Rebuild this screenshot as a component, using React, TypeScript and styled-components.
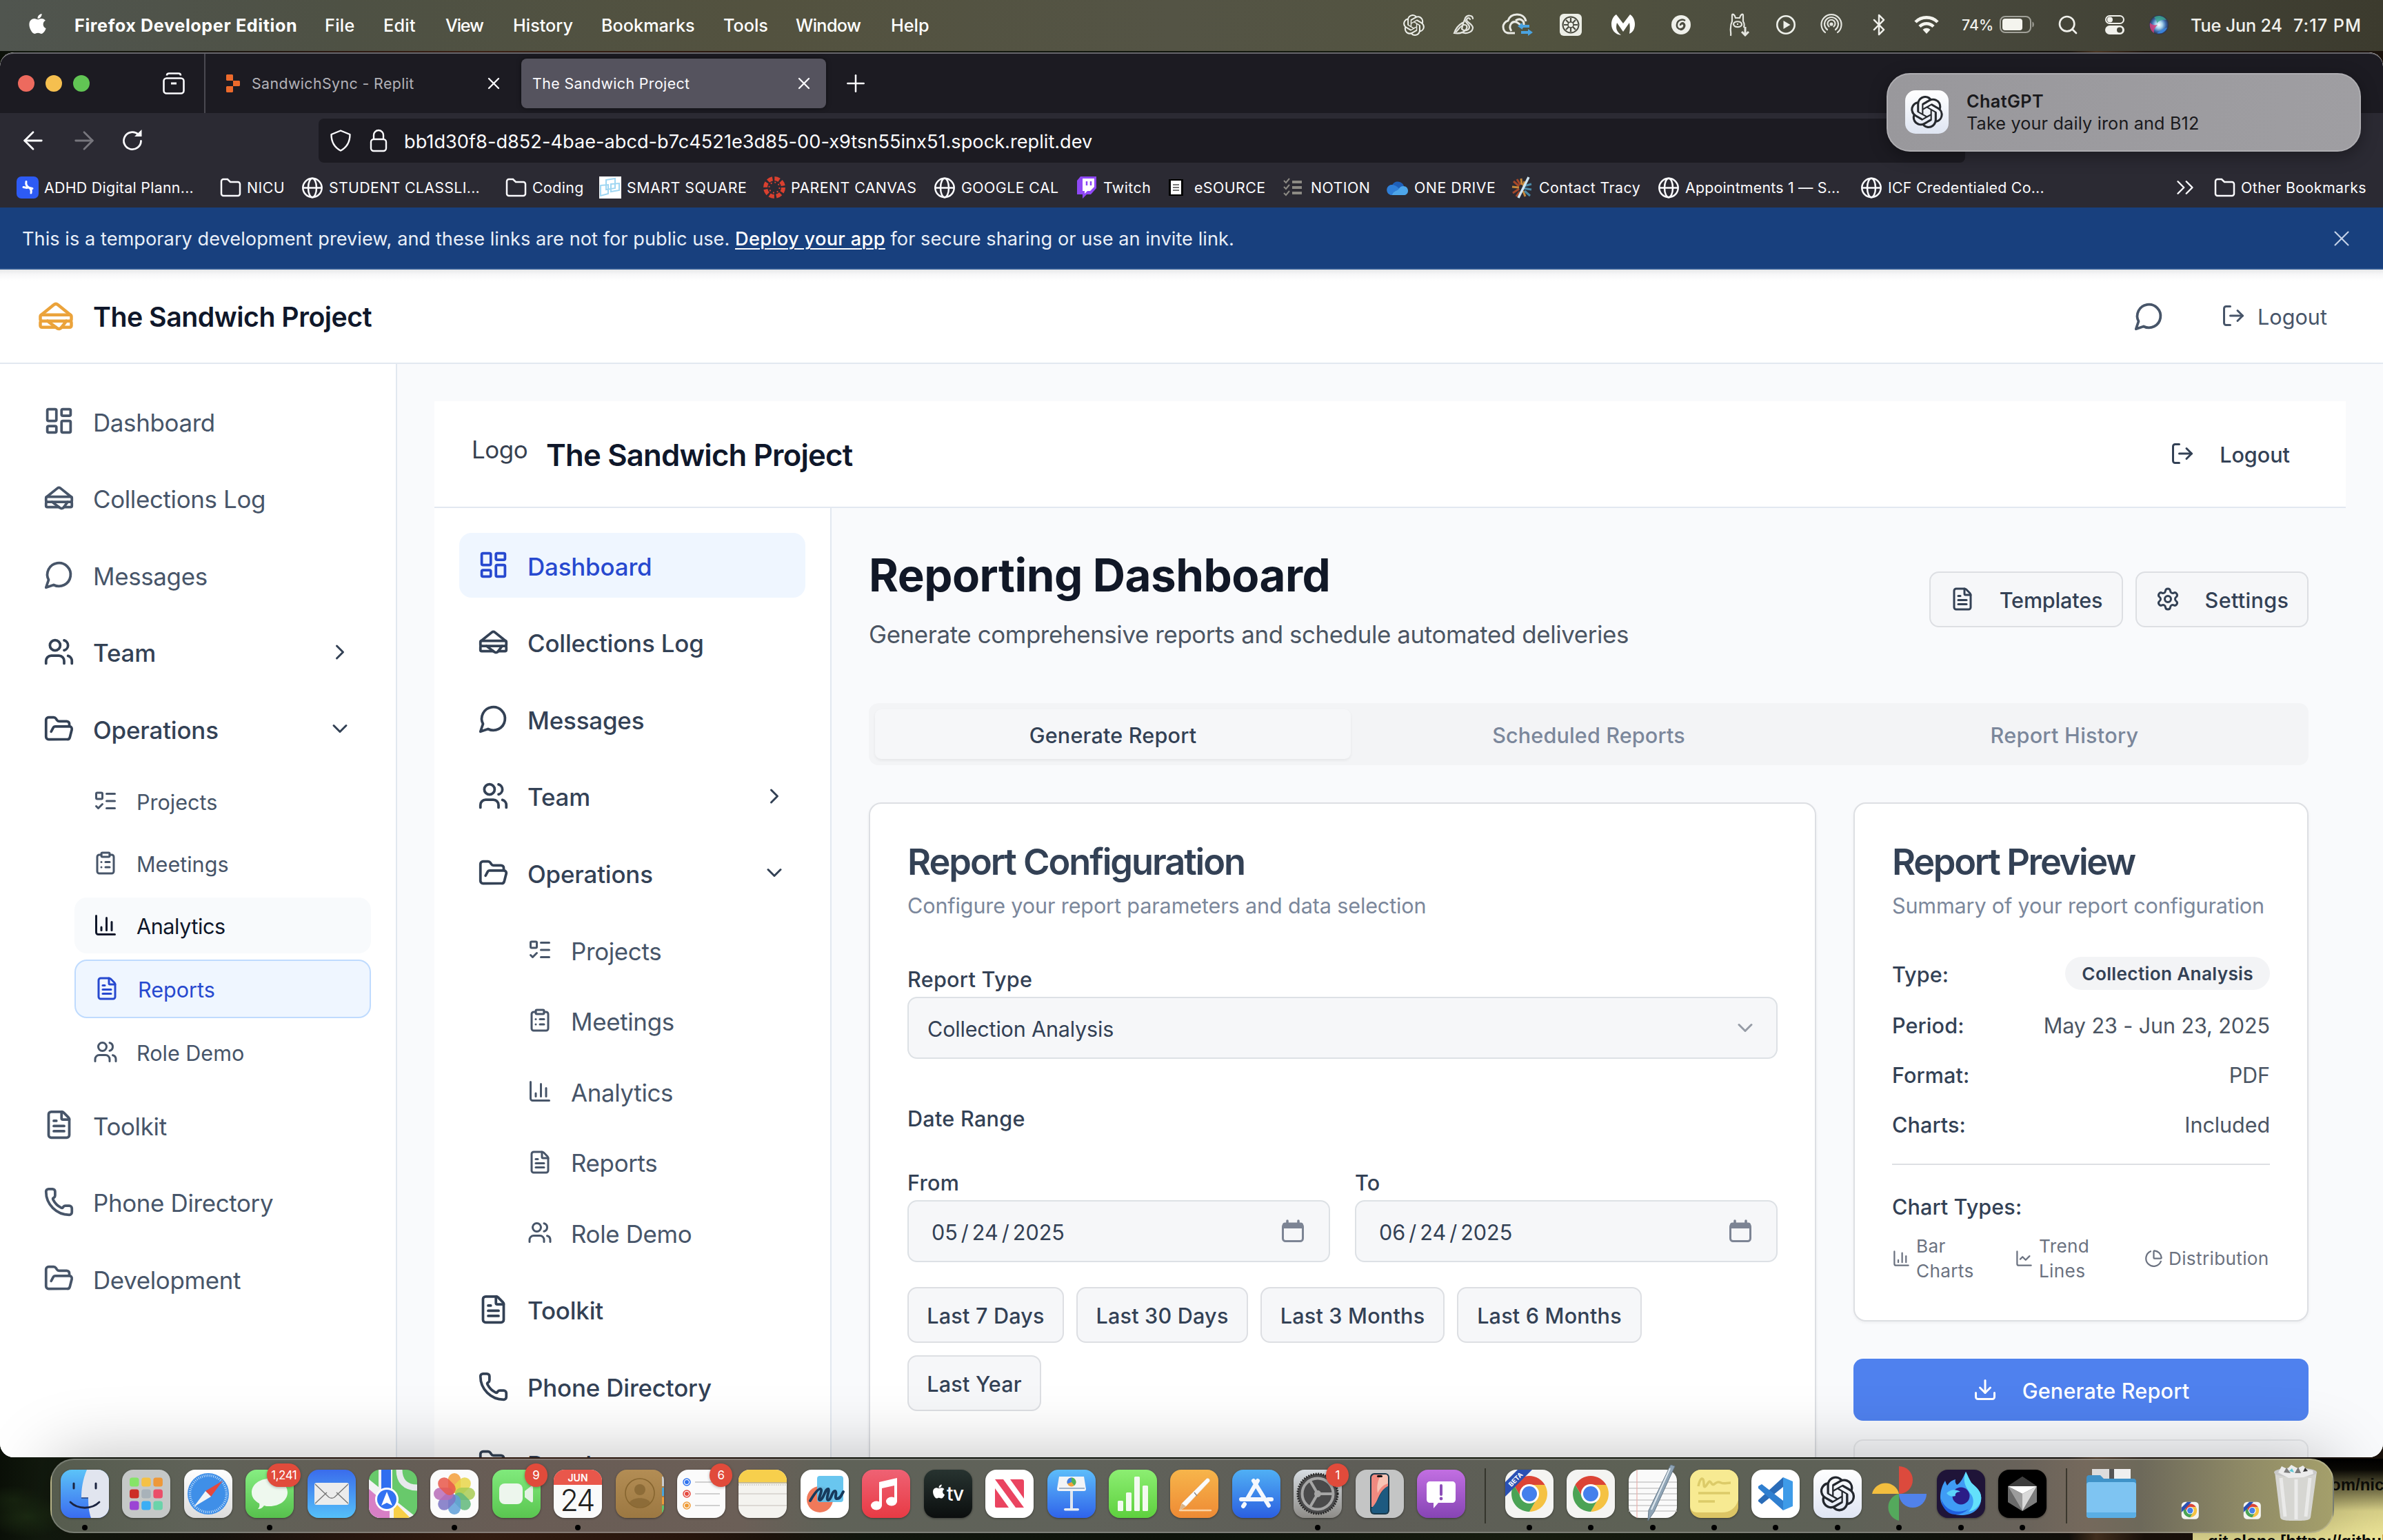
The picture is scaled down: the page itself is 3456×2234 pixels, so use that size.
import React from 'react';
import styled, { createGlobalStyle, css } from 'styled-components';
import {
  ArrowLeft,
  ArrowRight,
  Bluetooth,
  ChartColumn,
  ChartLine,
  ChartPie,
  ChevronDown,
  ChevronRight,
  ChevronsRight,
  ClipboardList,
  Download,
  FileText,
  FolderOpen,
  LayoutDashboard,
  ListTodo,
  LogOut,
  Phone,
  Plus,
  Sandwich,
  Search,
  Settings,
  Users,
  X,
} from 'lucide-react';
import { FaApple } from 'react-icons/fa';

const Global = createGlobalStyle`
  * { box-sizing: border-box; }
  body {
    margin: 0;
    font-family: Inter, "Noto Sans", sans-serif;
    -webkit-font-smoothing: antialiased;
  }
  svg { display: block; flex: none; }
`;

const type = (size: number, weight: number, spacing = 0, line = 1.43) => css`
  display: block;
  font-size: ${size * 0.97}px;
  font-weight: ${weight};
  letter-spacing: ${spacing}em;
  line-height: ${size * line}px;
  margin-top: 0.05em;
  margin-bottom: -0.05em;
  white-space: nowrap;
`;

/* ---------- shared glyphs ---------- */

const OPENAI =
  'M22.2819 9.8211a5.9847 5.9847 0 0 0-.5157-4.9108 6.0462 6.0462 0 0 0-6.5098-2.9A6.0651 6.0651 0 0 0 4.9807 4.1818a5.9847 5.9847 0 0 0-3.9977 2.9 6.0462 6.0462 0 0 0 .7427 7.0966 5.98 5.98 0 0 0 .511 4.9107 6.051 6.051 0 0 0 6.5146 2.9001A5.9847 5.9847 0 0 0 13.2599 24a6.0557 6.0557 0 0 0 5.7718-4.2058 5.9894 5.9894 0 0 0 3.9977-2.9001 6.0557 6.0557 0 0 0-.7475-7.0729zm-9.022 12.6081a4.4755 4.4755 0 0 1-2.8764-1.0408l.1419-.0804 4.7783-2.7582a.7948.7948 0 0 0 .3927-.6813v-6.7369l2.02 1.1686a.071.071 0 0 1 .038.052v5.5826a4.504 4.504 0 0 1-4.4945 4.4944zm-9.6607-4.1254a4.4708 4.4708 0 0 1-.5346-3.0137l.142.0852 4.783 2.7582a.7712.7712 0 0 0 .7806 0l5.8428-3.3685v2.3324a.0804.0804 0 0 1-.0332.0615L9.74 19.9502a4.4992 4.4992 0 0 1-6.1408-1.6464zM2.3408 7.8956a4.485 4.485 0 0 1 2.3655-1.9728V11.6a.7664.7664 0 0 0 .3879.6765l5.8144 3.3543-2.0201 1.1685a.0757.0757 0 0 1-.071 0l-4.8303-2.7865A4.504 4.504 0 0 1 2.3408 7.872zm16.5963 3.8558L13.1038 8.364 15.1192 7.2a.0757.0757 0 0 1 .071 0l4.8303 2.7913a4.4944 4.4944 0 0 1-.6765 8.1042v-5.6772a.79.79 0 0 0-.407-.667zm2.0107-3.0231l-.142-.0852-4.7735-2.7818a.7759.7759 0 0 0-.7854 0L9.409 9.2297V6.8974a.0662.0662 0 0 1 .0284-.0615l4.8303-2.7866a4.4992 4.4992 0 0 1 6.6802 4.66zM8.3065 12.863l-2.02-1.1638a.0804.0804 0 0 1-.038-.0567V6.0742a4.4992 4.4992 0 0 1 7.3757-3.4537l-.142.0805L8.704 5.459a.7948.7948 0 0 0-.3927.6813zm1.0976-2.3654l2.602-1.4998 2.6069 1.4998v2.9994l-2.5974 1.4997-2.6067-1.4997Z';

const OpenAiMark = ({ size, color }: { size: number; color: string }) => (
  <svg width={size} height={size} viewBox="0 0 24 24" fill={color}>
    <path d={OPENAI} />
  </svg>
);

const MessageBubble = ({ size = 45 }: { size?: number }) => (
  <svg width={size} height={size} viewBox="0 0 24 24" fill="none" stroke="currentColor" strokeWidth="2" strokeLinecap="round" strokeLinejoin="round">
    <path d="M7.9 20A9 9 0 1 0 4 16.1L2 22Z" />
  </svg>
);

/* ---------- desktop ---------- */

const Screen = styled.div`
  position: relative;
  display: flex;
  flex-direction: column;
  width: 3456px;
  height: 2234px;
  overflow: hidden;
  background:
    radial-gradient(60px 30px at 40px 2200px, #1b2a12, transparent),
    radial-gradient(50px 20px at 20px 2175px, #16220f, transparent),
    linear-gradient(90deg, #0b1008 0, #121a0e 60px, #17140e 300px, #2a1810 480px, #3a2014 700px, #2d190f 1000px, #20160e 1120px, #141a10 1250px, #10160d 1700px, #1a2012 2200px, #12170f 2700px, #14110c 3000px, #4a3421 3040px, #1c130c 3110px, #1a120c 100%);
`;

const StickyNote = styled.div`
  position: absolute;
  left: 3180px;
  top: 2116px;
  width: 300px;
  height: 130px;
  padding: 19px 0 0 22px;
  color: #0c0c08;
  background: linear-gradient(180deg, #000 0, #0a0905 16px, #6f6a44 44px, #d8d088 76px, #f6ee9f 100%);
`;

const NoteLine = styled.div<{ $indent?: number }>`
  font-family: "Liberation Sans", Arial, sans-serif;
  font-size: 24px;
  font-weight: 700;
  line-height: 38px;
  height: 82px;
  white-space: nowrap;
  padding-left: ${(p) => p.$indent ?? 0}px;
`;

/* ---------- menu bar ---------- */

const MenuBar = styled.div`
  display: flex;
  align-items: center;
  flex: none;
  height: 74px;
  padding: 0 0 2px 38px;
  color: #fff;
  background: linear-gradient(90deg, #50554f 0, #4e5144 500px, #53523f 1100px, #545445 1700px, #52533f 2200px, #4a4b3f 2700px, #3c3b2e 3456px);
`;

const AppleSlot = styled.div`
  width: 70px;
  padding-bottom: 4px;
`;

const MenuItem = styled.span<{ $w: number; $bold?: boolean; $ls?: number }>`
  ${(p) => type(26, p.$bold ? 700 : 500, p.$ls ?? (p.$bold ? 0.0233 : 0))}
  width: ${(p) => p.$w}px;
`;

const StatusArea = styled.div`
  display: flex;
  align-items: center;
  width: 1441px;
  margin-left: auto;
  color: #f1f1ec;
`;

const StatusSlot = styled.div<{ $w: number }>`
  display: flex;
  align-items: center;
  justify-content: center;
  width: ${(p) => p.$w}px;
`;

const BatterySlot = styled.div`
  display: flex;
  align-items: center;
  gap: 9px;
  width: 134px;
  padding-left: 16px;
`;

const BatteryText = styled.span`
  ${type(22, 500)}
`;

const Clock = styled.div`
  display: flex;
  gap: 16px;
  padding-left: 14px;
`;

const ClockText = styled.span<{ $ls: number }>`
  ${(p) => type(26, 500, p.$ls)}
`;

const StatusIcons = () => (
  <StatusArea>
    <StatusSlot $w={71}>
      <OpenAiMark size={31} color="#eceee8" />
    </StatusSlot>
    <StatusSlot $w={75}>
      <svg width="34" height="32" viewBox="0 0 34 32" fill="none" stroke="#e4e5df" strokeWidth="2.2" strokeLinecap="round">
        <path d="M29 7c0-5-8-6-11-1-3 6 6 8 6 13s-7 7-11 3" />
        <path d="M25 8c-1-3-4-2-5 0-1 4 8 6 9 12 0 6-8 10-16 7" />
        <path d="M14 13C9 16 4 22 2 28c7 1 13 0 17-5 3-4 1-7-2-7-5 0-8 6-12 10M17 9c-2 4-3 9-4 13" />
      </svg>
    </StatusSlot>
    <StatusSlot $w={78}>
      <svg width="46" height="34" viewBox="0 0 46 34" fill="none" stroke="#e9eae4" strokeWidth="3">
        <path d="M20 29H12C6 29 3 25 3 20c0-4 3-8 7-9C12 5 17 2 23 2c7 0 12 4 13 10" />
        <path d="M15 26c-5-7 0-15 7-13 3 1 8 6 10 8" />
        <path d="M21 11c6-5 13 0 12 6" />
        <path d="M24 19l7-5v3h10v4H31v3z M46 28l-7-5v3H29v4h10v3z" fill="#4aa3e0" stroke="none" />
      </svg>
    </StatusSlot>
    <StatusSlot $w={78}>
      <svg width="32" height="32" viewBox="0 0 32 32">
        <rect width="32" height="32" rx="6" fill="#eceee6" />
        <circle cx="16" cy="16" r="11.5" fill="none" stroke="#4a4b40" strokeWidth="2" />
        <g stroke="#4a4b40" strokeWidth="2.2">
          <path d="M16 6v20M6 16h20M9 9l14 14M23 9L9 23" />
        </g>
        <circle cx="16" cy="16" r="4" fill="#eceee6" stroke="#4a4b40" strokeWidth="1.6" />
      </svg>
    </StatusSlot>
    <StatusSlot $w={74}>
      <svg width="34" height="30" viewBox="0 0 34 30" fill="#fff">
        <path d="M7 0l10 13L27 0c5 3 7 9 7 14 0 7-3 12-8 14 1-6 1-12 0-16l-9 13-9-13c-2 8-1 12 6 18C5 29 0 22 0 14 0 9 2 3 7 0z" />
      </svg>
    </StatusSlot>
    <StatusSlot $w={94}>
      <svg width="30" height="30" viewBox="0 0 30 30">
        <circle cx="15" cy="15" r="14" fill="#eff0ea" />
        <path d="M21 9c-4-3-11-1-12 5-1 5 3 8 6 7 5-1 6-7 2-8-2 0-3 1-3 3 0-3 3-5 5-3 3 3 0 9-5 9" fill="none" stroke="#4a4b40" strokeWidth="2.400" />
      </svg>
    </StatusSlot>
    <StatusSlot $w={74}>
      <svg width="30" height="34" viewBox="0 0 30 34" fill="none" stroke="#e4e5df" strokeWidth="2.2">
        <path d="M3 33c1-5-1-7 0-12 0-4 1-7 2-9V3c0-3 4-1 5 4h6c1-5 5-7 5-4v9c2 3 2 6 1 9M7 16c1-5 11-5 12 0s-11 6-12 0zM12 16h2" />
        <path d="M24 20v12m-5-5l5 5 5-5" strokeWidth="3" />
      </svg>
    </StatusSlot>
    <StatusSlot $w={62}>
      <svg width="30" height="30" viewBox="0 0 30 30">
        <circle cx="15" cy="15" r="12.7" fill="none" stroke="#eef0ea" strokeWidth="2.6" />
        <path d="M11.5 9v12l10-6z" fill="#eef0ea" />
      </svg>
    </StatusSlot>
    <StatusSlot $w={70}>
      <svg width="32" height="32" viewBox="0 0 32 32" fill="none" stroke="#e4e5df" strokeWidth="2.2" strokeLinecap="round">
        <path d="M7 27a14.500 14.500 0 1 1 18 0" />
        <path d="M10 23a10 10 0 1 1 12 0" />
        <path d="M12.500 18.500a5.500 5.500 0 1 1 7 0" />
        <circle cx="16" cy="15" r="1.500" fill="#e4e5df" />
      </svg>
    </StatusSlot>
    <StatusSlot $w={67}>
      <Bluetooth size={34} strokeWidth={1.7} />
    </StatusSlot>
    <StatusSlot $w={71}>
      <svg width="36" height="26" viewBox="0 0 36 26" fill="none" stroke="#f4f4ee" strokeWidth="4.600">
        <path d="M2 9a22.600 22.600 0 0 1 32 0" />
        <path d="M8 15.500a14 14 0 0 1 20 0" />
        <path d="M18 26l-5.500-6a8 8 0 0 1 11 0z" fill="#f4f4ee" stroke="none" />
      </svg>
    </StatusSlot>
    <BatterySlot>
      <BatteryText>74%</BatteryText>
      <svg width="51" height="25" viewBox="0 0 51 25">
        <rect x="1" y="1" width="44" height="23" rx="7" fill="none" stroke="#a2a29a" strokeWidth="2" />
        <rect x="4" y="4" width="29" height="17" rx="4" fill="#f4f4ee" />
        <path d="M47.500 8.500c3 1 3 7 0 8z" fill="#a2a29a" />
      </svg>
    </BatterySlot>
    <StatusSlot $w={72}>
      <Search size={32} strokeWidth={2} />
    </StatusSlot>
    <StatusSlot $w={64}>
      <svg width="28" height="28" viewBox="0 0 28 28">
        <rect x="1" y="1" width="26" height="11" rx="5.500" fill="none" stroke="#f1f1ec" strokeWidth="2" />
        <circle cx="7" cy="6.500" r="4" fill="#f1f1ec" />
        <rect y="15" width="28" height="13" rx="6.500" fill="#f1f1ec" />
        <circle cx="21" cy="21.500" r="4" fill="#45463a" />
      </svg>
    </StatusSlot>
    <StatusSlot $w={64}>
      <svg width="30" height="30" viewBox="0 0 30 30">
        <defs>
          <radialGradient id="siri" cx="50%" cy="50%" r="50%">
            <stop offset="0" stopColor="#fff" />
            <stop offset=".35" stopColor="#a9d6ee" />
            <stop offset=".7" stopColor="#3f6fb0" />
            <stop offset="1" stopColor="#2b3048" />
          </radialGradient>
        </defs>
        <circle cx="15" cy="15" r="14" fill="url(#siri)" />
        <path d="M2 12c3 3 6 4 11 3-4 4-6 8-5 12C3 24 1 18 2 12z" fill="#d2407a" opacity=".85" />
        <path d="M8 4c6-4 14-2 18 4-5-1-11 0-14 5 0-3-1-6-4-9z" fill="#3aa58b" opacity=".8" />
        <path d="M12 27c5-3 8-6 15-8-2 6-8 10-15 8z" fill="#3a86e0" opacity=".9" />
      </svg>
    </StatusSlot>
    <Clock>
      <ClockText $ls={-0.0065}>Tue Jun 24</ClockText>
      <ClockText $ls={0.04}>7:17 PM</ClockText>
    </Clock>
  </StatusArea>
);

const menus: [string, number, number][] = [
  ['File', 85, 0.012],
  ['Edit', 90, 0.011],
  ['View', 98, -0.048],
  ['History', 128, 0],
  ['Bookmarks', 177, 0],
  ['Tools', 105, 0],
  ['Window', 138, -0.0255],
  ['Help', 80, 0],
];

/* ---------- browser chrome ---------- */

const BrowserWindow = styled.div`
  display: flex;
  flex-direction: column;
  flex: none;
  height: 2038px;
  margin-top: 2px;
  overflow: hidden;
  border-radius: 20px;
  background: #fff;
`;

const TabStrip = styled.div`
  display: flex;
  align-items: center;
  flex: none;
  height: 88px;
  background: #1c1b22;
  border-top: 2px solid #66656b;
  border-radius: 20px 20px 0 0;
`;

const TrafficLights = styled.div`
  display: flex;
  gap: 16px;
  width: 236px;
  padding-left: 26px;
`;

const Light = styled.i<{ $c: string }>`
  width: 24px;
  height: 24px;
  border-radius: 50%;
  background: ${(p) => p.$c};
`;

const FirefoxViewButton = styled.div`
  display: flex;
  align-items: center;
  height: 100%;
  width: 62px;
  border-right: 2px solid #4a4951;
`;

const Tab = styled.div<{ $active?: boolean; $w: number }>`
  display: flex;
  align-items: center;
  width: ${(p) => p.$w}px;
  height: 72px;
  padding: 0 ${(p) => (p.$active ? 18 : 26)}px 0 ${(p) => (p.$active ? 16 : 24)}px;
  border-radius: 8px;
  color: ${(p) => (p.$active ? '#fbfbfe' : '#b3b2b8')};
  background: ${(p) => (p.$active ? '#55535e' : 'transparent')};
  box-shadow: ${(p) => (p.$active ? '0 0 6px rgba(0,0,0,.5)' : 'none')};
`;

const TabLabel = styled.span`
  ${type(22, 400, 0.019)}
  flex: 1;
`;

const TabFavicon = styled.div`
  width: 32px;
  margin-right: 11px;
`;

const NewTab = styled.div`
  margin-left: 23px;
  color: #fbfbfe;
`;

const NavBar = styled.div`
  display: flex;
  align-items: center;
  flex: none;
  height: 80px;
  color: #fbfbfe;
  background: #2b2a33;
`;

const NavButtons = styled.div`
  display: flex;
  align-items: center;
  width: 462px;
  padding-left: 27px;
  gap: 32px;
`;

const UrlField = styled.div`
  display: flex;
  align-items: center;
  width: 2388px;
  height: 64px;
  padding-left: 16px;
  border-radius: 8px;
  background: #1c1b22;
`;

const UrlText = styled.span`
  ${type(28, 400, 0.0005)}
  margin-left: 22px;
  padding-top: 1px;
`;

const BookmarkBar = styled.div`
  display: flex;
  align-items: center;
  flex: none;
  height: 57px;
  padding: 0 24px 1px;
  color: #fbfbfe;
  background: #2b2a33;
`;

const Bookmark = styled.div<{ $w?: number }>`
  display: flex;
  align-items: center;
  gap: 8px;
  width: ${(p) => (p.$w ? `${p.$w}px` : 'auto')};
`;

const BookmarkLabel = styled.span<{ $ls?: number }>`
  ${(p) => type(22, 400, p.$ls ?? 0.02)}
`;

const BookmarkEnd = styled.div`
  display: flex;
  align-items: center;
  gap: 20px;
  margin-left: auto;
`;

const FolderGlyph = () => (
  <svg width="32" height="32" viewBox="0 0 32 32" fill="none" stroke="#fbfbfe" strokeWidth="2.500">
    <path d="M3 25V7a3 3 0 0 1 3-3h6l4 4h11a3 3 0 0 1 3 3v14a3 3 0 0 1-3 3H6a3 3 0 0 1-3-3z" />
  </svg>
);

const GlobeGlyph = () => (
  <svg width="32" height="32" viewBox="0 0 32 32" fill="none" stroke="#fbfbfe" strokeWidth="2.500">
    <circle cx="16" cy="16.500" r="13.700" />
    <ellipse cx="16" cy="16.500" rx="6" ry="13.700" />
    <path d="M2.500 16.500h27" />
  </svg>
);

const PlannerGlyph = () => (
  <svg width="32" height="32" viewBox="0 0 32 32">
    <rect width="32" height="32" rx="7" fill="#2d5bf5" />
    <path d="M14 7.500c-1 5 1 7 4 8.500 3 2 4 4 3 8M10 15.500l5 1M17 16l6 1.500" fill="none" stroke="#fff" strokeWidth="3" strokeLinecap="round" />
  </svg>
);

const SquareGlyph = () => (
  <svg width="32" height="32" viewBox="0 0 32 32">
    <rect width="32" height="32" fill="#fff" />
    <path d="M10 5l13-2v14l-13 2zM2 13l11-1v13L2 28zM17 11l12-1v10l-12 2z" fill="none" stroke="#9fd6f2" strokeWidth="2" />
  </svg>
);

const CanvasGlyph = () => (
  <svg width="32" height="32" viewBox="0 0 32 32">
    <circle cx="16" cy="16" r="13" fill="none" stroke="#d9402f" strokeWidth="6" strokeDasharray="7.2 3" />
    <circle cx="16" cy="16" r="7.500" fill="none" stroke="#d9402f" strokeWidth="2" strokeDasharray="2 3.900" />
  </svg>
);

const TwitchGlyph = () => (
  <svg width="32" height="32" viewBox="0 0 32 32">
    <path d="M7 0h23v17l-8 9h-6l-6 6v-6H2V6z" fill="#8f48f5" />
    <path d="M10 3h17v12l-6 6h-4l-4 4v-4h-3z" fill="#fff" />
    <path d="M16 7v6M22 7v6" stroke="#8f48f5" strokeWidth="2.500" />
  </svg>
);

const SourceGlyph = () => (
  <svg width="32" height="32" viewBox="0 0 32 32">
    <rect x="3" y="4" width="21" height="24" fill="#000" />
    <rect x="6" y="6" width="15" height="20" fill="#fff" />
    <path d="M9 12h9M9 16h9M9 20h9" stroke="#777" strokeWidth="2" />
  </svg>
);

const NotionGlyph = () => (
  <svg width="32" height="32" viewBox="0 0 32 32" fill="none" stroke="#8c8a84" strokeWidth="3">
    <path d="M13 8h14M13 16h14M13 24h14" strokeWidth="4" />
    <path d="M1 6l3 3 5-6M1 15l3 3 5-6M1 24l3 3 5-6" strokeWidth="2" />
  </svg>
);

const CloudGlyph = () => (
  <svg width="32" height="32" viewBox="0 0 32 32">
    <path d="M8 13c2-7 14-8 17 1l-3 8H6z" fill="#1e5fb8" />
    <path d="M7 12c7 0 11 6 16 10l-4 5H7c-9-1-9-14 0-15z" fill="#2f7fd8" />
    <path d="M24 14c9 0 9 12 2 13H8c1-5 6-6 9-8 2-3 4-5 7-5z" fill="#4da6ea" />
  </svg>
);

const TracyGlyph = () => (
  <svg width="32" height="32" viewBox="0 0 32 32" fill="none" strokeWidth="3">
    <path d="M3 7l8 7M2 24l9-6M7 29l5-7M8 4l5 8" stroke="#a5482a" />
    <path d="M14 3l1 9M1 15l10 1M20 29l-3-8M19 7l-2 7" stroke="#c98a3b" />
    <path d="M18 14l11-3M17 17l12 2M19 21l8 7" stroke="#4a8aa8" />
    <path d="M25 1L10 31" stroke="#cfe6f3" strokeWidth="3.500" />
  </svg>
);

const bookmarks: { icon: React.ComponentType; label: string; w: number; ls?: number }[] = [
  { icon: PlannerGlyph, label: 'ADHD Digital Plann...', w: 294, ls: 0.014 },
  { icon: FolderGlyph, label: 'NICU', w: 119 },
  { icon: GlobeGlyph, label: 'STUDENT CLASSLI...', w: 295, ls: 0.015 },
  { icon: FolderGlyph, label: 'Coding', w: 137 },
  { icon: SquareGlyph, label: 'SMART SQUARE', w: 238, ls: 0.025 },
  { icon: CanvasGlyph, label: 'PARENT CANVAS', w: 247 },
  { icon: GlobeGlyph, label: 'GOOGLE CAL', w: 206 },
  { icon: TwitchGlyph, label: 'Twitch', w: 132 },
  { icon: SourceGlyph, label: 'eSOURCE', w: 169 },
  { icon: NotionGlyph, label: 'NOTION', w: 150 },
  { icon: CloudGlyph, label: 'ONE DRIVE', w: 181, ls: 0.025 },
  { icon: TracyGlyph, label: 'Contact Tracy', w: 212 },
  { icon: GlobeGlyph, label: 'Appointments 1 — S...', w: 294, ls: 0.01 },
  { icon: GlobeGlyph, label: 'ICF Credentialed Co...', w: 290, ls: 0.012 },
];

const PreviewBanner = styled.div`
  display: flex;
  align-items: center;
  justify-content: space-between;
  flex: none;
  height: 90px;
  padding: 2px 41px 0 32px;
  color: #e9eff8;
  background: #18407e;
  border-bottom: 2px solid #2d568f;
`;

const BannerText = styled.span`
  ${type(28, 400, 0.0015)}
`;

const BannerLink = styled.a`
  color: #fff;
  font-weight: 500;
  letter-spacing: 0.013em;
  text-decoration: underline;
  text-decoration-thickness: 2px;
  text-underline-offset: 4px;
`;

/* ---------- app shell ---------- */

const AppHeader = styled.header`
  display: flex;
  align-items: center;
  flex: none;
  height: 137px;
  padding: 0 81px 0 54px;
  background: linear-gradient(180deg, #e6e7e9 0, #f7f7f8 7px, #fff 16px);
  border-bottom: 2px solid #e2e8f0;
`;

const BrandIcon = styled.div`
  color: #eba33b;
  margin-right: 27px;
`;

const BrandTitle = styled.h1`
  ${type(40.5, 600, -0.0125)}
  color: #0f172a;
`;

const HeaderActions = styled.div`
  display: flex;
  align-items: center;
  margin-left: auto;
  gap: 82px;
  color: #475569;
`;

const LogoutButton = styled.div<{ $gap: number; $c: string }>`
  display: flex;
  align-items: center;
  gap: ${(p) => p.$gap}px;
  color: ${(p) => p.$c};
`;

const ButtonLabel = styled.span<{ $w?: number; $ls?: number }>`
  ${(p) => type(31.5, p.$w ?? 500, p.$ls ?? 0.01)}
`;

const Body = styled.div`
  display: flex;
  flex: 1;
  min-height: 0;
  overflow: hidden;
`;

const Sidebar = styled.nav`
  flex: none;
  width: 576px;
  padding: 36px;
  background: #fff;
  border-right: 2px solid #e2e8f0;
`;

const NavList = styled.div`
  display: flex;
  flex-direction: column;
  gap: 18px;
`;

const SubList = styled.div`
  display: flex;
  flex-direction: column;
  gap: 9px;
  margin-left: 72px;
`;

const NavRow = styled.div<{ $active?: boolean; $c: string }>`
  display: flex;
  align-items: center;
  height: 93.6px;
  padding: 0 27px;
  gap: 27px;
  border-radius: 18px;
  color: ${(p) => (p.$active ? '#2749cf' : p.$c)};
  background: ${(p) => (p.$active ? '#eff6ff' : 'transparent')};
`;

const NavLabel = styled.span<{ $medium?: boolean }>`
  ${(p) => type(36, p.$medium ? 500 : 400, p.$medium ? -0.005 : -0.01, 1.5)}
  flex: 1;
`;

const SmallRow = styled.div<{ $state?: 'hover' | 'active' }>`
  display: flex;
  align-items: center;
  height: ${(p) => (p.$state === 'active' ? 85 : 81)}px;
  padding: 0 ${(p) => (p.$state === 'active' ? 25 : 27)}px 0 27px;
  gap: 27px;
  border-radius: 18px;
  border: ${(p) => (p.$state === 'active' ? '2px solid #bfdbfe' : 'none')};
  color: ${(p) => (p.$state === 'active' ? '#2749cf' : p.$state === 'hover' ? '#0f172a' : '#475569')};
  background: ${(p) => (p.$state === 'active' ? '#eff6ff' : p.$state === 'hover' ? '#f8fafc' : 'transparent')};
`;

const SmallLabel = styled.span<{ $ls?: number }>`
  ${(p) => type(31.5, 400, p.$ls ?? 0.0)}
`;

const Main = styled.main`
  flex: 1;
  min-width: 0;
  padding: 54px;
  background: #f9fafc;
`;

const InnerHeader = styled.div`
  display: flex;
  align-items: center;
  height: 155px;
  padding: 0 81px 0 54px;
  background: #fff;
  border-bottom: 2px solid #e2e8f0;
`;

const LogoAlt = styled.span`
  ${type(36, 400, -0.012)}
  width: 81px;
  margin-right: 27px;
  padding-bottom: 15px;
  color: #374151;
`;

const InnerTitle = styled.h1`
  ${type(45, 600, -0.018)}
  flex: 1;
  color: #0f172a;
`;

const InnerBody = styled.div`
  display: flex;
`;

const Page = styled.section`
  flex: 1;
  min-width: 0;
  padding: 54px;
  background: #f9fafc;
`;

const PageHead = styled.div`
  display: flex;
  align-items: center;
  justify-content: space-between;
`;

const PageTitle = styled.h2`
  ${type(67.5, 700, -0.0078, 1.2)}
  color: #111827;
`;

const PageSubtitle = styled.p`
  ${type(36, 400, -0.0117, 1.6)}
  color: #4b5563;
  padding-top: 18px;
`;

const ButtonRow = styled.div`
  display: flex;
  flex-wrap: wrap;
  gap: 18px;
`;

const OutlineButton = styled.div<{ $w: number }>`
  display: flex;
  align-items: center;
  justify-content: center;
  gap: 36px;
  width: ${(p) => p.$w}px;
  height: 81px;
  border: 2px solid #dddfe3;
  border-radius: 14px;
  color: #334155;
  background: #f6f7f9;
`;

const TabList = styled.div`
  display: grid;
  grid-template-columns: repeat(3, 1fr);
  height: 90px;
  margin-top: 72.5px;
  padding: 9px;
  border-radius: 14px;
  background: #f3f4f6;
`;

const TabTrigger = styled.div<{ $active?: boolean }>`
  display: flex;
  align-items: center;
  justify-content: center;
  border-radius: 9px;
  color: ${(p) => (p.$active ? '#334155' : '#7b879b')};
  background: ${(p) => (p.$active ? '#f6f7f9' : 'transparent')};
  box-shadow: ${(p) => (p.$active ? '0 2px 4px rgba(0,0,0,.06)' : 'none')};
`;

const Columns = styled.div`
  display: grid;
  grid-template-columns: 1374px 660px;
  gap: 54px;
  margin-top: 54px;
`;

const Card = styled.div<{ $tall?: boolean }>`
  height: ${(p) => (p.$tall ? '1100px' : 'auto')};
  padding: 54px;
  border: 2px solid #dddfe3;
  border-radius: 18px;
  background: #fff;
  box-shadow: 0 2px 4px rgba(0, 0, 0, 0.05);
`;

const CardTitle = styled.h3<{ $ls: number }>`
  ${(p) => type(54, 600, p.$ls, 1)}
  color: #334155;
`;

const CardText = styled.p<{ $ls: number }>`
  ${(p) => type(31.5, 400, p.$ls)}
  padding-top: 15px;
  color: #7b879b;
`;

const CardBody = styled.div`
  padding-top: 54px;
`;

const FieldLabel = styled.span`
  ${type(31.5, 500, 0.0095, 1.829)}
  height: 57.6px;
  margin: 0;
  padding-top: 4px;
  color: #334155;
`;

const FieldBox = styled.div`
  display: flex;
  align-items: center;
  height: 90px;
  padding: 0 27px;
  border: 2px solid #dde1e5;
  border-radius: 14px;
  color: #334155;
  background: #f6f7f9;
`;

const FieldValue = styled.span`
  ${type(31.5, 400, -0.006)}
  flex: 1;
`;

const Group = styled.div`
  padding-top: 54px;
`;

const DateGrid = styled.div`
  display: grid;
  grid-template-columns: 1fr 1fr;
  gap: 36px;
  padding: 36px 0;
`;

const DateParts = styled.div`
  display: flex;
  flex: 1;
  gap: 5px;
  padding-left: 6px;
`;

const DatePart = styled.span`
  ${type(31.5, 400, 0)}
`;

const CalendarSlot = styled.div`
  padding-right: 7px;
`;

const SideColumn = styled.div`
  display: flex;
  flex-direction: column;
`;

const SummaryRow = styled.div<{ $h?: number }>`
  display: flex;
  align-items: center;
  justify-content: space-between;
  height: ${(p) => p.$h ?? 45}px;
  margin-bottom: 27px;
`;

const SummaryKey = styled.span`
  ${type(31.5, 500, 0.003)}
  color: #334155;
`;

const SummaryValue = styled.span`
  ${type(31.5, 400, -0.003)}
  color: #4b5563;
`;

const Badge = styled.span`
  display: flex;
  align-items: center;
  height: 48px;
  padding: 0 24px;
  border-radius: 24px;
  color: #334155;
  background: #f3f4f6;
`;

const BadgeText = styled.span`
  ${type(27, 600, 0.0123, 1.333)}
`;

const Divider = styled.hr`
  height: 2px;
  margin: 36px 0 0;
  border: 0;
  background: #dddfe3;
`;

const ChartSection = styled.div`
  padding-top: 36px;
`;

const ChartTypes = styled.div`
  display: grid;
  grid-template-columns: 178px 188px auto;
  align-items: center;
  padding-top: 18px;
`;

const ChartType = styled.div`
  display: flex;
  align-items: center;
  gap: 8px;
  color: #6b7280;
`;

const ChartTypeLabel = styled.span`
  ${type(27, 400, 0.012, 1.333)}
  white-space: pre-line;
`;

const PrimaryButton = styled.div`
  display: flex;
  align-items: center;
  justify-content: center;
  gap: 36px;
  height: 90px;
  margin-top: 54px;
  border-radius: 14px;
  color: #fff;
  background: #4f81ee;
`;

const GhostButton = styled.div`
  height: 90px;
  margin-top: 27px;
  border: 2px solid #e6e8eb;
  border-radius: 14px;
  background: #f8f9fb;
`;

const CalendarGlyph = () => (
  <svg width="36" height="36" viewBox="0 0 36 36">
    <path d="M10 3v5M26 3v5" stroke="#7c8494" strokeWidth="3.500" strokeLinecap="round" />
    <rect x="3.500" y="7.500" width="29" height="25" rx="4" fill="none" stroke="#7c8494" strokeWidth="3" />
    <path d="M3 14V9a3.500 3.500 0 0 1 3.500-3.500h23A3.500 3.500 0 0 1 33 9v5z" fill="#7c8494" />
  </svg>
);

const DateInput = ({ label, parts }: { label: string; parts: string[] }) => (
  <div>
    <FieldLabel>{label}</FieldLabel>
    <FieldBox>
      <DateParts>
        <DatePart>{parts[0]}</DatePart>
        <DatePart>/</DatePart>
        <DatePart>{parts[1]}</DatePart>
        <DatePart>/</DatePart>
        <DatePart>{parts[2]}</DatePart>
      </DateParts>
      <CalendarSlot>
        <CalendarGlyph />
      </CalendarSlot>
    </FieldBox>
  </div>
);

type IconType = React.ComponentType<{ size?: number }>;

const topItems: { icon: IconType; label: string; group?: 'closed' | 'open' }[] = [
  { icon: LayoutDashboard, label: 'Dashboard' },
  { icon: Sandwich, label: 'Collections Log' },
  { icon: MessageBubble, label: 'Messages' },
  { icon: Users, label: 'Team', group: 'closed' },
  { icon: FolderOpen, label: 'Operations', group: 'open' },
];

const subItems: { icon: IconType; label: string; ls?: number }[] = [
  { icon: ListTodo, label: 'Projects' },
  { icon: ClipboardList, label: 'Meetings' },
  { icon: ChartColumn, label: 'Analytics', ls: -0.0134 },
  { icon: FileText, label: 'Reports' },
  { icon: Users, label: 'Role Demo' },
];

const endItems: { icon: IconType; label: string }[] = [
  { icon: FileText, label: 'Toolkit' },
  { icon: Phone, label: 'Phone Directory' },
  { icon: FolderOpen, label: 'Development' },
];

const OuterSidebar = () => (
  <Sidebar>
    <NavList>
      {topItems.map(({ icon: Icon, label, group }) => (
        <NavRow key={label} $c={group ? '#334155' : '#475569'}>
          <Icon size={45} />
          <NavLabel $medium={!!group}>{label}</NavLabel>
          {group === 'closed' && <ChevronRight size={36} />}
          {group === 'open' && <ChevronDown size={36} />}
        </NavRow>
      ))}
      <SubList>
        {subItems.map(({ icon: Icon, label, ls }) => (
          <SmallRow key={label} $state={label === 'Reports' ? 'active' : label === 'Analytics' ? 'hover' : undefined}>
            <Icon size={36} />
            <SmallLabel $ls={ls}>{label}</SmallLabel>
          </SmallRow>
        ))}
      </SubList>
      {endItems.map(({ icon: Icon, label }) => (
        <NavRow key={label} $c="#475569">
          <Icon size={45} />
          <NavLabel>{label}</NavLabel>
        </NavRow>
      ))}
    </NavList>
  </Sidebar>
);

const InnerSidebar = () => (
  <Sidebar>
    <NavList>
      {topItems.map(({ icon: Icon, label, group }) => (
        <NavRow key={label} $c="#334155" $active={label === 'Dashboard'}>
          <Icon size={45} />
          <NavLabel $medium>{label}</NavLabel>
          {group === 'closed' && <ChevronRight size={36} />}
          {group === 'open' && <ChevronDown size={36} />}
        </NavRow>
      ))}
      <SubList>
        {subItems.map(({ icon: Icon, label }) => (
          <NavRow key={label} $c="#475569">
            <Icon size={36} />
            <NavLabel>{label}</NavLabel>
          </NavRow>
        ))}
      </SubList>
      {endItems.map(({ icon: Icon, label }) => (
        <NavRow key={label} $c="#334155">
          <Icon size={45} />
          <NavLabel $medium>{label}</NavLabel>
        </NavRow>
      ))}
    </NavList>
  </Sidebar>
);

const ranges: [string, number][] = [
  ['Last 7 Days', 227],
  ['Last 30 Days', 249],
  ['Last 3 Months', 267],
  ['Last 6 Months', 268],
  ['Last Year', 194],
];

const ReportPage = () => (
  <Page>
    <PageHead>
      <div>
        <PageTitle>Reporting Dashboard</PageTitle>
        <PageSubtitle>Generate comprehensive reports and schedule automated deliveries</PageSubtitle>
      </div>
      <ButtonRow>
        <OutlineButton $w={281}>
          <FileText size={36} />
          <ButtonLabel $ls={-0.0055}>Templates</ButtonLabel>
        </OutlineButton>
        <OutlineButton $w={251}>
          <Settings size={36} />
          <ButtonLabel $ls={0.0111}>Settings</ButtonLabel>
        </OutlineButton>
      </ButtonRow>
    </PageHead>
    <TabList>
      <TabTrigger $active>
        <ButtonLabel $ls={0.0063}>Generate Report</ButtonLabel>
      </TabTrigger>
      <TabTrigger>
        <ButtonLabel $ls={0.0047}>Scheduled Reports</ButtonLabel>
      </TabTrigger>
      <TabTrigger>
        <ButtonLabel $ls={0.0094}>Report History</ButtonLabel>
      </TabTrigger>
    </TabList>
    <Columns>
      <Card $tall>
        <CardTitle $ls={-0.0398}>Report Configuration</CardTitle>
        <CardText $ls={-0.004}>Configure your report parameters and data selection</CardText>
        <CardBody>
          <FieldLabel>Report Type</FieldLabel>
          <FieldBox>
            <FieldValue>Collection Analysis</FieldValue>
            <ChevronDown size={36} color="#969ca6" />
          </FieldBox>
          <Group>
            <FieldLabel>Date Range</FieldLabel>
            <DateGrid>
              <DateInput label="From" parts={['05', '24', '2025']} />
              <DateInput label="To" parts={['06', '24', '2025']} />
            </DateGrid>
            <ButtonRow>
              {ranges.map(([label, w]) => (
                <OutlineButton key={label} $w={w}>
                  <ButtonLabel $ls={0.007}>{label}</ButtonLabel>
                </OutlineButton>
              ))}
            </ButtonRow>
          </Group>
        </CardBody>
      </Card>
      <SideColumn>
        <Card>
          <CardTitle $ls={-0.0445}>Report Preview</CardTitle>
          <CardText $ls={-0.005}>Summary of your report configuration</CardText>
          <CardBody>
            <SummaryRow $h={48}>
              <SummaryKey>Type:</SummaryKey>
              <Badge>
                <BadgeText>Collection Analysis</BadgeText>
              </Badge>
            </SummaryRow>
            <SummaryRow>
              <SummaryKey>Period:</SummaryKey>
              <SummaryValue>May 23 - Jun 23, 2025</SummaryValue>
            </SummaryRow>
            <SummaryRow>
              <SummaryKey>Format:</SummaryKey>
              <SummaryValue>PDF</SummaryValue>
            </SummaryRow>
            <SummaryRow>
              <SummaryKey>Charts:</SummaryKey>
              <SummaryValue>Included</SummaryValue>
            </SummaryRow>
            <Divider />
            <ChartSection>
              <SummaryKey>Chart Types:</SummaryKey>
              <ChartTypes>
                <ChartType>
                  <ChartColumn size={27} />
                  <ChartTypeLabel>{'Bar\nCharts'}</ChartTypeLabel>
                </ChartType>
                <ChartType>
                  <ChartLine size={27} />
                  <ChartTypeLabel>{'Trend\nLines'}</ChartTypeLabel>
                </ChartType>
                <ChartType>
                  <ChartPie size={27} />
                  <ChartTypeLabel>Distribution</ChartTypeLabel>
                </ChartType>
              </ChartTypes>
            </ChartSection>
          </CardBody>
        </Card>
        <PrimaryButton>
          <Download size={36} />
          <ButtonLabel $ls={0.0063}>Generate Report</ButtonLabel>
        </PrimaryButton>
        <GhostButton />
      </SideColumn>
    </Columns>
  </Page>
);

/* ---------- notification ---------- */

const Notification = styled.div`
  position: absolute;
  left: 2736px;
  top: 106px;
  display: flex;
  align-items: center;
  gap: 26px;
  width: 688px;
  height: 114px;
  padding: 0 0 2px 25px;
  border: 2px solid #aeadb1;
  border-radius: 34px;
  color: #19191c;
  background: linear-gradient(100deg, #99989c, #9f9ea2);
  box-shadow: 0 6px 24px rgba(0, 0, 0, 0.35);
`;

const NotificationIcon = styled.div`
  display: flex;
  align-items: center;
  justify-content: center;
  width: 63px;
  height: 63px;
  border-radius: 15px;
  background: linear-gradient(180deg, #fff, #dfe5f2);
`;

const NotificationTitle = styled.div`
  ${type(26, 600, 0.0161, 1.231)}
`;

const NotificationText = styled.div`
  ${type(26, 400, 0.0061, 1.231)}
`;

/* ---------- dock ---------- */

const Dock = styled.div`
  position: absolute;
  left: 73px;
  top: 2116px;
  display: flex;
  align-items: flex-start;
  gap: 19.42px;
  width: 3312px;
  height: 108px;
  padding: 14px 0 0 13px;
  border: 2px solid rgba(255, 255, 255, 0.2);
  border-radius: 34px;
  background: linear-gradient(90deg, #565c4e 0, #5f6258 200px, #635e56 450px, #695c55 700px, #6b5f57 1000px, #5f6258 1130px, #60625a 1500px, #5e5d57 1900px, #5d6155 2300px, #5e6157 2600px, #68625a 2850px, #75695c 2950px, #6d695a 3030px, #8f8a66 3180px, #a5a06b 3312px);
  box-shadow: 0 0 100px rgba(0, 0, 0, 0.27);
`;

const Slot = styled.div`
  position: relative;
  flex: none;
  width: 70px;
  height: 90px;
`;

const Tile = styled.div<{ $bg?: string; $bare?: boolean }>`
  width: 70px;
  height: 70px;
  overflow: ${(p) => (p.$bare ? 'visible' : 'hidden')};
  border-radius: 16px;
  background: ${(p) => p.$bg ?? 'transparent'};
  box-shadow: ${(p) => (p.$bg ? '0 1px 3px rgba(0,0,0,.4)' : 'none')};
  svg { overflow: ${(p) => (p.$bare ? 'visible' : 'hidden')}; }
`;

const RunningDot = styled.i`
  display: block;
  width: 8px;
  height: 8px;
  margin: 10px auto 0;
  border-radius: 50%;
  background: #000;
`;

const DockBadge = styled.span`
  position: absolute;
  top: -9px;
  right: -10px;
  min-width: 33px;
  height: 34px;
  padding: 0 6px;
  border-radius: 17px;
  color: #fff;
  background: #e14b3b;
  font-size: 17px;
  letter-spacing: -0.5px;
  line-height: 34px;
  text-align: center;
  box-shadow: 0 1px 4px rgba(0, 0, 0, 0.3);
`;

const DockDivider = styled.i`
  flex: none;
  width: 2px;
  height: 80px;
  margin: -2px 8px 0 9px;
  background: rgba(30, 30, 22, 0.65);
`;

const Art = ({ children }: { children: React.ReactNode }) => (
  <svg width="70" height="70" viewBox="0 0 70 70">
    {children}
  </svg>
);

const ChromeMark = () => (
  <>
    <path d="M12.500 22A26 26 0 0 1 57.500 22L35 22 23.740 41.500Z" fill="#dc4436" />
    <path d="M57.500 22A26 26 0 0 1 35 61L46.260 41.500 35 22Z" fill="#f5c242" />
    <path d="M35 61A26 26 0 0 1 12.500 22L23.740 41.500 46.260 41.500Z" fill="#4ba355" />
    <circle cx="35" cy="35" r="14" fill="#fff" />
    <circle cx="35" cy="35" r="11" fill="#4480ec" />
  </>
);

const BetaRibbon = () => (
  <>
    <path d="M0 18L18 0h21L0 39z" fill="#2a50b4" />
    <text x="0" y="3.500" transform="translate(15 14) rotate(-45)" fontFamily="Inter" fontSize="9.500" fontWeight="700" fill="#fff" textAnchor="middle">BETA</text>
  </>
);

const petals = ['#f3a03c', '#e8d54a', '#a9cc55', '#62b87c', '#5f9fd8', '#7c74c4', '#b86cb8', '#e8594a'];

type DockEntry = { id: string; bg?: string; bare?: boolean; dot?: boolean; badge?: string; art: React.ReactNode };

const mainApps: DockEntry[] = [
  {
    id: 'finder', bg: 'linear-gradient(180deg,#5cc3f8,#3a6cf0)', dot: true,
    art: (
      <>
        <path d="M38 0C32 14 30 28 30 41h10c0 12 1 20 4 29h26V0z" fill="#e1e5ef" />
        <path d="M30 41h10" fill="none" stroke="#24407c" strokeWidth="1.500" />
        <path d="M19 20v7M51 20v7" stroke="#1b2440" strokeWidth="3" strokeLinecap="round" />
        <path d="M14 47c11 11 31 11 42 0" fill="none" stroke="#1b2440" strokeWidth="2.800" strokeLinecap="round" />
      </>
    ),
  },
  {
    id: 'launchpad', bg: '#c5c8c7',
    art: ['#86e468', '#f5c145', '#ee9838', '#cc2d26', '#a8b2b9', '#ea4f69', '#9b45d4', '#3caef5', '#6bd3aa'].map((c, i) => (
      <rect key={c} x={11 + (i % 3) * 17.2} y={11.500 + Math.floor(i / 3) * 17} width="13.500" height="13" rx="3.500" fill={c} />
    )),
  },
  {
    id: 'safari', bg: 'linear-gradient(180deg,#fff,#dcdcdc)',
    art: (
      <>
        <circle cx="35" cy="35" r="30" fill="#3f8fe8" />
        <circle cx="35" cy="35" r="26.500" fill="none" stroke="#cfe6fb" strokeWidth="3.500" strokeDasharray="0.900 1.900" />
        <path d="M56 16L39 39l-8-8z" fill="#e5483e" />
        <path d="M14 54l17-23 8 8z" fill="#f3f4f5" />
      </>
    ),
  },
  {
    id: 'messages', bg: 'linear-gradient(180deg,#86ee82,#57c14d)', dot: true, badge: '1,241',
    art: <path d="M35 13c15 0 26 9 26 20S50 53 35 53c-3 0-6 0-8-1-2 3-5 5-9 5 2-2 3-5 2-8-7-4-11-9-11-16 0-11 11-20 26-20z" fill="#eef8ee" />,
  },
  {
    id: 'mail', bg: 'linear-gradient(180deg,#3a6cec,#55c0f9)',
    art: (
      <>
        <rect x="10" y="19" width="50" height="32" rx="3" fill="#ececec" />
        <path d="M11 21l20 19c3 2 5 2 8 0l20-19M11 49l17-16M59 49L42 33" fill="none" stroke="#777" strokeWidth="1.400" />
      </>
    ),
  },
  {
    id: 'maps', bg: '#68c96b',
    art: (
      <>
        <path d="M0 14l70 56H0z" fill="#f2f2f4" />
        <path d="M0 28l30 26v16H0z" fill="#d77fc5" />
        <path d="M36 70V46l24 24z" fill="#f7cf48" />
        <path d="M44 0c0 16 8 26 26 26" fill="none" stroke="#e7e9ec" strokeWidth="9" />
        <path d="M14 0h20v30H14z" fill="#f2f2f4" />
        <path d="M18 0h14v40H18z" fill="#2f6ef0" />
        <circle cx="26" cy="43" r="17" fill="#fff" />
        <circle cx="26" cy="43" r="14" fill="#3272f2" />
        <path d="M26 32l8 20-8-4-8 4z" fill="#fff" />
      </>
    ),
  },
  {
    id: 'photos', bg: '#fbfbfb', dot: true,
    art: petals.map((c, i) => (
      <rect key={c} x="26" y="5" width="18" height="29" rx="9" fill={c} opacity=".86" transform={`rotate(${i * 45} 35 35)`} />
    )),
  },
  {
    id: 'facetime', bg: 'linear-gradient(180deg,#80ea7c,#5ac650)', badge: '9',
    art: (
      <>
        <rect x="10" y="20" width="34" height="30" rx="8" fill="#edf6ed" />
        <path d="M47 31l9-7c2-1 3 0 3 2v19c0 2-1 3-3 2l-9-7z" fill="#e4f2e4" />
      </>
    ),
  },
  {
    id: 'calendar', bg: '#fafafa', dot: true,
    art: (
      <>
        <rect width="70" height="22" fill="#e9574b" />
        <text x="35" y="17" fontFamily="Inter" fontSize="14" fontWeight="600" fill="#fff" textAnchor="middle">JUN</text>
        <text x="34" y="59.500" fontFamily="Inter" fontSize="43" fontWeight="300" fill="#222" textAnchor="middle" letterSpacing="-2">24</text>
      </>
    ),
  },
  {
    id: 'contacts', bg: 'linear-gradient(180deg,#b38d54,#9c7842)',
    art: (
      <>
        <circle cx="35" cy="34" r="21" fill="none" stroke="#86652f" strokeWidth="1.600" />
        <circle cx="35" cy="29" r="8" fill="#8d6c38" />
        <path d="M20 48c3-9 27-9 30 0-8 9-22 9-30 0z" fill="#8d6c38" />
        <path d="M67 10h3v14h-3z" fill="#c8ccd0" />
        <path d="M67 26h3v12h-3z" fill="#48a4dc" />
        <path d="M67 40h3v10h-3z" fill="#ee9c3a" />
        <path d="M67 52h3v10h-3z" fill="#5fc46c" />
      </>
    ),
  },
  {
    id: 'reminders', bg: '#fbfbfb', badge: '6',
    art: ['#2f73f0', '#e5483e', '#ee9a35'].map((c, i) => (
      <g key={c}>
        <circle cx="14" cy={18 + i * 17} r="5" fill="none" stroke={c} strokeWidth="1.500" />
        <circle cx="14" cy={18 + i * 17} r="3" fill={c} />
        <path d={`M26 ${18 + i * 17}h36`} stroke="#c2c2c2" strokeWidth="1.600" />
      </g>
    )),
  },
  {
    id: 'notes', bg: '#f4f3ef',
    art: (
      <>
        <rect width="70" height="18" fill="#f7cf4c" />
        <path d="M0 19h70" stroke="#b7a97a" strokeWidth="1.500" />
        <path d="M0 22h70" stroke="#b9b6ad" strokeWidth="1.500" strokeDasharray="1.200 2" />
        <path d="M0 35h70M0 52h70" stroke="#d3d1cc" strokeWidth="1.300" />
      </>
    ),
  },
  {
    id: 'freeform', bg: '#fff',
    art: (
      <>
        <circle cx="28" cy="43" r="19" fill="#f0795a" />
        <rect x="24" y="9" width="38" height="38" rx="4" fill="#5cc1ee" opacity=".92" />
        <path d="M14 45c6-10 12-18 15-17 4 2-5 16-1 16 5 0 8-17 12-16 3 1-4 15 0 16s6-14 10-13-2 11 3 11 6-5 9-10" fill="none" stroke="#173a5c" strokeWidth="4" strokeLinecap="round" />
      </>
    ),
  },
  {
    id: 'music', bg: 'linear-gradient(180deg,#ef6274,#e83a44)',
    art: (
      <g fill="#fff">
        <path d="M25 18l26-6v34h-4V23l-18 4v25h-4z" />
        <ellipse cx="21" cy="52" rx="8" ry="6.500" />
        <ellipse cx="43" cy="46" rx="8" ry="6.500" />
      </g>
    ),
  },
  {
    id: 'tv', bg: 'linear-gradient(180deg,#273330,#0b0e0e)',
    art: (
      <>
        <g transform="translate(10 20)"><FaApple size={23} color="#fff" /></g>
        <text x="33" y="45" fontFamily="Inter" fontSize="28" fontWeight="500" fill="#fff" letterSpacing="-1">tv</text>
      </>
    ),
  },
  {
    id: 'news', bg: '#fff',
    art: (
      <g fill="#ea4460">
        <path d="M14 14h12l30 41H44z" />
        <path d="M14 27v26c0 1 1 2 2 2h18z" />
        <path d="M56 42V17c0-2-1-3-3-3H36z" />
      </g>
    ),
  },
  {
    id: 'keynote', bg: 'linear-gradient(180deg,#5dbdfa,#2f63ea)',
    art: (
      <>
        <path d="M17 10h36l3 18c0 2-1 3-3 3H17c-2 0-3-1-3-3z" fill="#f2f4f7" />
        <path d="M17 27h37" stroke="#9fb2c9" strokeWidth="2" />
        <circle cx="35" cy="18" r="6.500" fill="#f0a33a" />
        <path d="M35 18v-6.500a6.500 6.500 0 0 1 4 11.500z" fill="#4fb35a" />
        <path d="M35 18v-6.500a6.500 6.500 0 0 0-6 9z" fill="#3f7fe8" />
        <path d="M33 31h4v26h-4z" fill="#dfe6ef" />
        <rect x="24" y="56" width="22" height="3.500" rx="1.700" fill="#e6ecf3" />
      </>
    ),
  },
  {
    id: 'numbers', bg: 'linear-gradient(180deg,#8cee72,#5ed03e)',
    art: (
      <g fill="#f3faf1">
        <rect x="13" y="45" width="8" height="15" rx="1.500" />
        <rect x="25" y="33" width="8" height="27" rx="1.500" />
        <rect x="37" y="10" width="8" height="50" rx="1.500" />
        <rect x="49" y="23" width="8" height="37" rx="1.500" />
      </g>
    ),
  },
  {
    id: 'pages', bg: 'linear-gradient(180deg,#f7b54b,#ee8a34)',
    art: (
      <>
        <path d="M14 59h45" stroke="#fbd3a4" strokeWidth="2.500" strokeLinecap="round" />
        <path d="M53 13c3-1 5 1 4 4L23 53l-9 6 3-10z" fill="#fbfbfb" stroke="#e3e3e3" strokeWidth=".600" />
        <path d="M17 49l6 4-9 6z" fill="#d8b48a" />
        <path d="M35 33l4 5" stroke="#888" strokeWidth="1.500" />
      </>
    ),
  },
  {
    id: 'appstore', bg: 'linear-gradient(180deg,#50b0f5,#2b5fe0)',
    art: (
      <g stroke="#f5f8fd" strokeWidth="6" strokeLinecap="round" fill="none">
        <path d="M37 16L22 42M31 16l22 36M13 43h31M52 43h5M18 50l-2 3" />
      </g>
    ),
  },
  {
    id: 'settings', bg: 'linear-gradient(180deg,#d7dde2,#8e8c88)', dot: true, badge: '1',
    art: (
      <>
        <circle cx="35" cy="35" r="29" fill="#4a4a4b" />
        <circle cx="35" cy="35" r="29" fill="none" stroke="#222" strokeWidth="3" strokeDasharray="1.800 1.800" />
        <circle cx="35" cy="35" r="22.500" fill="none" stroke="#a5a5a5" strokeWidth="4" />
        <path d="M35 35h22M35 35L24 16M35 35L24 54" stroke="#a5a5a5" strokeWidth="4" />
        <circle cx="35" cy="35" r="5" fill="#a5a5a5" />
      </>
    ),
  },
  {
    id: 'mirroring', bg: '#c4c5c5',
    art: (
      <>
        <rect x="21" y="5" width="28" height="60" rx="6" fill="#18384a" />
        <path d="M23 12c0-3 2-5 5-5h14c3 0 5 2 5 5v12c-12 6-14 18-20 30h-4z" fill="#f08a80" />
        <path d="M47 24c-12 6-12 20-24 32v3c0 3 2 4 4 4h16c2 0 4-1 4-4z" fill="#1d5a80" />
        <path d="M38 7h5c3 0 4 2 4 5v8c-8 2-12 8-15 14-2-10 0-20 6-27z" fill="#f7c3b4" />
        <rect x="31" y="8" width="8" height="3" rx="1.500" fill="#111" />
      </>
    ),
  },
  {
    id: 'feedback', bg: 'linear-gradient(180deg,#c26fe2,#8644b4)',
    art: (
      <>
        <path d="M19 17h32c3 0 5 2 5 5v21c0 3-2 5-5 5H31l-7 8v-8h-5c-3 0-5-2-5-5V22c0-3 2-5 5-5z" fill="#fff" />
        <path d="M35 23v13" stroke="#8c4db8" strokeWidth="4" strokeLinecap="round" />
        <circle cx="35" cy="42" r="2.400" fill="#8c4db8" />
      </>
    ),
  },
];

const extraApps: DockEntry[] = [
  {
    id: 'chrome-beta', bg: '#f4f4f2', dot: true,
    art: (
      <>
        <ChromeMark />
        <BetaRibbon />
      </>
    ),
  },
  { id: 'chrome', bg: '#f4f4f2', dot: true, art: <ChromeMark /> },
  {
    id: 'textedit', bg: '#fafafa', bare: true, dot: true,
    art: (
      <>
        <path d="M0 18h70M0 27h70M0 35h70M0 44h70M0 52h70M0 60h70" stroke="#c9c9c9" strokeWidth="1.300" />
        <path d="M12 0v70" stroke="#eab0ac" strokeWidth="1.200" />
        <path d="M61-7l6 2-30 66-9 13 1-15z" fill="#8fa4b5" stroke="#66798a" strokeWidth="1" />
        <path d="M60-2L33 58" stroke="#dfe8ef" strokeWidth="2" />
      </>
    ),
  },
  {
    id: 'stickies', bg: '#dcc565', dot: true,
    art: (
      <>
        <path d="M0 0h70v44c-4 12-12 18-24 18H10C4 62 0 58 0 52z" fill="#f7ea92" />
        <path d="M12 24c3-14 8-14 8-4s4 2 7-2 4 6 8 3 6-4 10-2 8 0 14 0M12 34h46M12 46h24" fill="none" stroke="#dccb69" strokeWidth="3.500" />
      </>
    ),
  },
  {
    id: 'vscode', bg: '#fff', dot: true,
    art: (
      <>
        <path d="M46 11l14 6v36l-14 6z" fill="#3e9be8" />
        <path d="M46 11v14L15 50l-5-4V44z" fill="#2a6cb8" />
        <path d="M46 59V45L15 21l-5 3v3z" fill="#2f7fd0" />
      </>
    ),
  },
  {
    id: 'chatgpt', bg: 'linear-gradient(180deg,#fff,#dfe5f3)', dot: true,
    art: <path d={OPENAI} fill="#23272e" transform="translate(9.500 9.500) scale(2.120)" />,
  },
  {
    id: 'gphotos', bare: true, dot: true,
    art: (
      <>
        <path d="M35-5a20 20 0 0 1 0 40z" fill="#dc4a3d" />
        <path d="M-4 35a20 20 0 0 1 39 0z" fill="#f3be3e" />
        <path d="M35 35h40a20 20 0 0 1-40 0z" fill="#5182ea" />
        <path d="M35 35v39a20 20 0 0 1 0-39z" fill="#54a95c" />
      </>
    ),
  },
  {
    id: 'firefox', bg: '#1f1438', dot: true,
    art: (
      <>
        <path d="M12 16c1 3 2 5 3 7 3-5 7-8 12-9-1 3 0 6 2 8 6-3 9-11 13-19 3 6 5 11 8 16 9 8 16 14 14 26-2 14-14 21-29 21S5 55 5 40c0-9 3-18 7-24z" fill="#3f9cf5" />
        <path d="M42 3c3 6 5 11 8 16 9 8 16 14 14 26-3 9-9 14-18 16 9-9 8-20 3-26-6-8-13-18-7-32z" fill="#63e0fb" />
        <circle cx="35" cy="38" r="12.500" fill="#2b1d87" />
        <path d="M14 34c6-6 14-6 20-2-6 0-8 3-7 6-5 2-10 0-13-4z" fill="#5bd2fa" />
        <path d="M6 42c5 16 23 24 40 15-8 8-20 10-28 6-7-4-11-12-12-21z" fill="#1f5fe0" />
      </>
    ),
  },
  {
    id: 'cursor', bg: '#000', dot: true,
    art: (
      <>
        <path d="M35 10l21 14v23L35 60 14 47V24z" fill="#555" />
        <path d="M35 10l21 14H14z" fill="#3d3d3d" />
        <path d="M14 24h42L35 35z" fill="#fff" />
        <path d="M56 24L35 60V35z" fill="#d9d9d9" />
        <path d="M56 24v23L35 60z" fill="#7e7e7e" />
        <path d="M14 24l21 11v25z" fill="#9c9c9c" />
        <path d="M14 24v23l21 13z" fill="#6a6a6a" />
      </>
    ),
  },
];

const MiniChrome = () => (
  <g transform="translate(48 46) scale(.38)">
    <rect width="66" height="66" rx="14" fill="#f4f4f2" x="2" y="2" />
    <ChromeMark />
    <path d="M2 24L24 2h16L2 42z" fill="#2a50b4" />
  </g>
);

const fileEntries: DockEntry[] = [
  {
    id: 'folder', bare: true,
    art: (
      <>
        <path d="M8-1h56v22H8z" fill="#efefef" />
        <path d="M8-1h27v22H8z" fill="#dcdcdc" />
        <path d="M33-1h7v18h-7z" fill="#555" />
        <path d="M0 12c0-2 1-4 4-4h16l5 5h43c3 0 4 2 4 4v10H0z" fill="#3f92c8" />
        <rect x="0" y="18" width="72" height="52" rx="4" fill="#7ec4f2" />
        <path d="M0 62h72v4c0 2-2 4-4 4H4c-2 0-4-2-4-4z" fill="#5aaee4" />
      </>
    ),
  },
  { id: 'minimized-1', bare: true, art: <MiniChrome /> },
  { id: 'minimized-2', bare: true, art: <MiniChrome /> },
  {
    id: 'trash', bare: true,
    art: (
      <>
        <path d="M5 3h61l-9 66c-1 4-5 5-22 5s-21-1-22-5z" fill="#d9d9d8" opacity=".95" />
        <path d="M14 12l6 56M36 14v58M56 12l-6 56" stroke="#efefef" strokeWidth="5" opacity=".8" />
        <ellipse cx="35" cy="4" rx="31" ry="7" fill="#c9c9c9" />
        <path d="M10 4l5-9 8 4 6-6 9 5 8-4 6 6 8 1 1 5-14 5-22 1z" fill="#ececec" />
        <path d="M18 4l4-7 6 8zM34 5l5-9 4 9z" fill="#7d7d7d" />
        <path d="M26 2l4-4 3 6z" fill="#5dc6d4" />
        <path d="M46 3l3-6 4 5z" fill="#333" />
      </>
    ),
  },
];

const DockItem = ({ entry }: { entry: DockEntry }) => (
  <Slot>
    <Tile $bg={entry.bg} $bare={entry.bare}>
      <Art>{entry.art}</Art>
    </Tile>
    {entry.badge && <DockBadge>{entry.badge}</DockBadge>}
    {entry.dot && <RunningDot />}
  </Slot>
);

export default function App() {
  return (
    <>
      <Global />
      <Screen>
        <MenuBar>
          <AppleSlot>
            <FaApple size={33} />
          </AppleSlot>
          <MenuItem $w={363} $bold>Firefox Developer Edition</MenuItem>
          {menus.map(([label, w, ls]) => (
            <MenuItem key={label} $w={w} $ls={ls}>{label}</MenuItem>
          ))}
          <StatusIcons />
        </MenuBar>

        <StickyNote>
          <NoteLine $indent={178}>om/nicu</NoteLine>
          <NoteLine>git clone [https://github</NoteLine>
        </StickyNote>

        <BrowserWindow>
          <TabStrip>
            <TrafficLights>
              <Light $c="#ed6a5e" />
              <Light $c="#f5bf4f" />
              <Light $c="#61c554" />
            </TrafficLights>
            <FirefoxViewButton>
              <svg width="32" height="32" viewBox="0 0 32 32" fill="none" stroke="#fbfbfe" strokeWidth="2.600">
                <path d="M6 4.500c0-2 1-3 3-3h14c2 0 3 1 3 3" />
                <rect x="1.500" y="8.500" width="29" height="22" rx="4" />
                <path d="M12 16h8" strokeWidth="3" />
              </svg>
            </FirefoxViewButton>
            <Tab $w={458}>
              <TabFavicon>
                <svg width="32" height="26" viewBox="0 0 32 26" fill="#ec6a2c">
                  <path d="M6 1.500C6 .7 6.700 0 7.500 0h7c.8 0 1.500.7 1.500 1.500V9H7.500C6.700 9 6 8.300 6 7.500zM16 9h8.500c.8 0 1.500.7 1.500 1.500v5c0 .8-.7 1.500-1.500 1.500H16zM6 18.500c0-.8.700-1.500 1.500-1.500H16v7.500c0 .8-.7 1.500-1.500 1.500h-7C6.700 26 6 25.300 6 24.500z" />
                </svg>
              </TabFavicon>
              <TabLabel>SandwichSync - Replit</TabLabel>
              <X size={28} strokeWidth={2} color="#fbfbfe" />
            </Tab>
            <Tab $w={442} $active>
              <TabLabel>The Sandwich Project</TabLabel>
              <X size={28} strokeWidth={2} />
            </Tab>
            <NewTab>
              <Plus size={40} strokeWidth={1.5} />
            </NewTab>
          </TabStrip>

          <NavBar>
            <NavButtons>
              <ArrowLeft size={42} strokeWidth={1.6} />
              <ArrowRight size={42} strokeWidth={1.6} color="#77767d" />
              <svg width="32" height="32" viewBox="0 0 32 32" fill="none" stroke="#fbfbfe" strokeWidth="2.800" strokeLinecap="round">
                <path d="M29.500 16.500A12.500 12.500 0 1 1 25.500 7" />
                <path d="M20 10h10.500V0z" fill="#fbfbfe" stroke="none" />
              </svg>
            </NavButtons>
            <UrlField>
              <svg width="32" height="32" viewBox="0 0 32 32" fill="none" stroke="#fbfbfe" strokeWidth="2.400" strokeLinejoin="round">
                <path d="M16 1.500L29.500 7c0 10-3 18-13.500 23.500C5.500 25 2.500 17 2.500 7z" />
              </svg>
              <svg width="54" height="34" viewBox="-24 0 54 34" fill="none" stroke="#fbfbfe" strokeWidth="2.400">
                <rect x="4" y="15" width="22" height="17" rx="4" />
                <path d="M8 15V9a7 7 0 0 1 14 0v6" />
              </svg>
              <UrlText>bb1d30f8-d852-4bae-abcd-b7c4521e3d85-00-x9tsn55inx51.spock.replit.dev</UrlText>
            </UrlField>
          </NavBar>

          <BookmarkBar>
            {bookmarks.map(({ icon: Icon, label, w, ls }) => (
              <Bookmark key={label} $w={w}>
                <Icon />
                <BookmarkLabel $ls={ls}>{label}</BookmarkLabel>
              </Bookmark>
            ))}
            <BookmarkEnd>
              <ChevronsRight size={42} strokeWidth={1.4} />
              <Bookmark>
                <FolderGlyph />
                <BookmarkLabel>Other Bookmarks</BookmarkLabel>
              </Bookmark>
            </BookmarkEnd>
          </BookmarkBar>

          <PreviewBanner>
            <BannerText>
              This is a temporary development preview, and these links are not for public use.{' '}
              <BannerLink>Deploy your app</BannerLink> for secure sharing or use an invite link.
            </BannerText>
            <X size={38} strokeWidth={1.3} color="#c4d2e8" />
          </PreviewBanner>

          <AppHeader>
            <BrandIcon>
              <Sandwich size={54} />
            </BrandIcon>
            <BrandTitle>The Sandwich Project</BrandTitle>
            <HeaderActions>
              <MessageBubble size={45} />
              <LogoutButton $gap={17} $c="#475569">
                <LogOut size={36} />
                <ButtonLabel $w={400} $ls={0.002}>Logout</ButtonLabel>
              </LogoutButton>
            </HeaderActions>
          </AppHeader>

          <Body>
            <OuterSidebar />
            <Main>
              <InnerHeader>
                <LogoAlt>Logo</LogoAlt>
                <InnerTitle>The Sandwich Project</InnerTitle>
                <LogoutButton $gap={36} $c="#334155">
                  <LogOut size={36} />
                  <ButtonLabel $ls={0}>Logout</ButtonLabel>
                </LogoutButton>
              </InnerHeader>
              <InnerBody>
                <InnerSidebar />
                <ReportPage />
              </InnerBody>
            </Main>
          </Body>
        </BrowserWindow>

        <Notification>
          <NotificationIcon>
            <OpenAiMark size={47} color="#26292e" />
          </NotificationIcon>
          <div>
            <NotificationTitle>ChatGPT</NotificationTitle>
            <NotificationText>Take your daily iron and B12</NotificationText>
          </div>
        </Notification>

        <Dock>
          {mainApps.map((e) => <DockItem key={e.id} entry={e} />)}
          <DockDivider />
          {extraApps.map((e) => <DockItem key={e.id} entry={e} />)}
          <DockDivider />
          {fileEntries.map((e) => <DockItem key={e.id} entry={e} />)}
        </Dock>
      </Screen>
    </>
  );
}
